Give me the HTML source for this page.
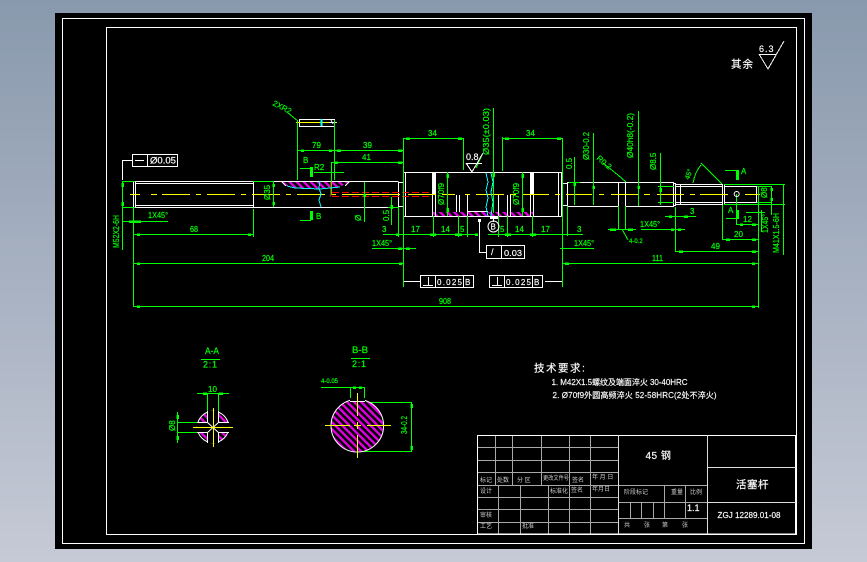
<!DOCTYPE html>
<html><head><meta charset="utf-8"><style>
html,body{margin:0;padding:0;width:867px;height:562px;overflow:hidden;background:linear-gradient(180deg,#8999ad 0%,#c6cad6 100%)}
svg{position:absolute;left:0;top:0}
text{font-family:"Liberation Sans","WenQuanYi Zen Hei","Noto Sans CJK SC",sans-serif}
.g{fill:#0f0;font-size:8px}.g text{stroke:#0f0;stroke-width:.2}.w{fill:#fff;font-size:8px}.w text{stroke:#fff;stroke-width:.15}.a{fill:#ccc;font-size:6px;font-family:"Noto Sans CJK SC",sans-serif}
</style></head><body>
<svg width="867" height="562" viewBox="0 0 867 562" fill="none">
<defs>
<pattern id="h" width="5" height="5" patternUnits="userSpaceOnUse" patternTransform="rotate(-45)"><rect width="5" height="5" fill="#000"/><rect width="2.4" height="5" fill="#e000e0"/></pattern>
</defs>
<rect x="55" y="13" width="757" height="536" fill="#000"/>
<g shape-rendering="crispEdges">
<rect x="62.5" y="18.5" width="742" height="525" stroke="#fff"/>
<rect x="106.5" y="27.5" width="690" height="507" stroke="#fff"/>

<!-- hatched -->
<path d="M282 182L286 186L296 188L320 189L340 187L349 182Z" fill="url(#h)"/>
<rect x="433" y="212" width="100" height="4" fill="url(#h)"/>

<!-- shaft white -->
<path stroke="#fff" d="M133.5 181.5H398.5M133.5 207.5H398.5M133.5 181.5V207.5M135.5 181.5V207.5M135 183.5H253M135 205.5H253M253.5 181.5V207.5
M398.5 182V207M398 182.5H403M398 206.5H403M403.5 172V216.5M405.5 172V216.5M403.5 172.5H561.5M403.5 216.5H561.5M561.5 172V216.5M558.5 172V216.5
M562 183.5H567M562 205.5H567M567.5 182V206.5M567 182.5H618M567 206.5H618M618.5 182V206.5M625.5 182V207M618 182.5H673M625 206.5H673M673.5 182V207M673 183.5H676M673 205.5H676M675.5 183V206M680.5 184V205M676 184.5H722M676 186.5H722M676 202.5H722M676 204.5H722M722.5 184V205M724.5 184V205M724 186.5H757M724 202.5H757M756.5 186V203M758.5 187V203
M456.5 195V212M459.5 195V212M467.5 195V216M467 211.5H488M498.5 195V216M507.5 195V216M510.5 195V216"/>
<rect x="432" y="172" width="4" height="23" fill="#fff"/><rect x="530" y="172" width="4" height="23" fill="#fff"/>
<path stroke="#fff" d="M432.5 195V216M435.5 195V216M530.5 195V216M533.5 195V216"/>

<!-- keyway -->
<rect x="299.5" y="119.5" width="35" height="7" stroke="#fff"/>
<path stroke="#ff0" d="M296 122.5H337"/>
<path stroke="#0ff" stroke-width="2" d="M321.5 119V126"/>
<path stroke="#fff" d="M331 120L333 124M329 122.5H336"/>

<!-- centre line -->
<path stroke="#ff0" d="M130 194.5H140M151 194.5H157M162 194.5H190M196 194.5H201M207 194.5H235M241 194.5H246M252 194.5H280M286 194.5H291M297 194.5H325M331 194.5H336M342 194.5H400M408 194.5H436M442 194.5H455M465 194.5H470M476 194.5H504M510 194.5H516M522 194.5H549M555 194.5H560M566 194.5H592M599 194.5H604M611 194.5H639M644 194.5H650M657 194.5H684M690 194.5H695M700 194.5H728M745 194.5H760"/>
<!-- red -->
<path stroke="#f00" stroke-dasharray="7 3" d="M332 192.5H432M332 196.5H432"/>
<path stroke="#f00" d="M330.5 182V196.5"/>

<!-- green dims -->
<path stroke="#0f0" d="M122.5 181V250M122 181.5H135M122 207.5H135M123 221.5H168M133.5 208V307M133 234.5H253M253.5 209V237M133 263.5H403M133 306.5H758M253 181.5H273M273.5 181V207M297.5 120V180M334.5 120V180M297 150.5H403M331.5 162V195M331 162.5H403M300 168.5H311M314 172.5H344M300 220.5H311
M403.5 138V287M403 138.5H463M463.5 138V170M502.5 137V171M502 138.5H562M562.5 138V287M493.5 108V213M447.5 172V216M522.5 172V216M383 234.5H478M488 234.5H583M433.5 216V237M458.5 216V237M507.5 216V237M532.5 216V237M467.5 216V237M498.5 216V237M398.5 207V237M372 248.5H416M391.5 197V225M388 207.5H398M364.5 182V222M574.5 157V205M569 182.5H580M560 248.5H594
M758.5 186V308M562 263.5H758M593.5 133V205M638.5 111V206M660.5 153V205M658 186.5H674M658 202.5H674M665 216.5H696M641 229.5H685M675.5 207V252M608 229.5H636M618.5 206V229M625.5 206V229M771.5 186V215M757 186.5H772M757 202.5H772M783.5 184V255M724 184.5H785M724 204.5H785M761.5 210V232M746 212.5H765M736.5 194V225M736 224.5H758M722.5 205V240M722 239.5H758M675 251.5H758M725 170.5H737M726 218.5H737M567.5 206V236"/>
<path stroke="#0f0" stroke-width="3" d="M311.5 167V177M311.5 211V220M737.5 170V180M737.5 210V219"/>
<path stroke="#0f0" d="M288 113L298 121M482 155L476 168M603 163L618 175L626 182M622 229L628 240M701 163L722 184M693 183Q695 172 701 165"/>
<!-- arrow blobs -->
<path stroke="#0f0" stroke-width="2.5" d="M122.5 183V187M122.5 202V206M129 221.5H141M137 234.5H140M248 234.5H251M137 263.5H140M399 263.5H402M137 306.5H140M273.5 184V187M273.5 202V205M301 150.5H304M329 150.5H332M337 150.5H341M398 150.5H402M334 162.5H338M398 162.5H402M406 138.5H410M458 138.5H462M505 138.5H509M557 138.5H561M447.5 174V178M447.5 208V212M522.5 174V178M522.5 208V212M493.5 173V177M396 234.5H399M430 234.5H436M455 234.5H462M475 234.5H478M505 234.5H511M530 234.5H536M398 248.5H402M406 248.5H410M565 263.5H569M752 263.5H755M752 306.5H755M752 224.5H756M740 224.5H743M726 239.5H730M752 239.5H756M679 251.5H683M752 251.5H756M593.5 186V189M638.5 186V189M660.5 188V192M771.5 188V191M771.5 198V201M574.5 182V186M391.5 205V209M364.5 194V197M610 229.5H616M628 229.5H633M669 216.5H672M684 216.5H688M671 229.5H674M678 229.5H681"/>

<!-- cyan -->
<path stroke="#0ff" d="M287 186L295 188L320 189L340 187M320 181L319 188L321 194L319 200L321 207M486 173L488 182L486 190L488 198L486 207L488 216M491 173L493 182L491 192L493 202L491 216"/>
<path stroke="#fff" d="M282 182L286 186M349 182L345 186"/>

<!-- boxes -->
<rect x="132.5" y="154.5" width="45" height="12" stroke="#fff"/>
<path stroke="#fff" d="M147.5 155V166M122.5 160.5H132M122.5 160V180M135 160.5H144"/>
<rect x="486.5" y="245.5" width="38" height="13" stroke="#fff"/>
<path stroke="#fff" d="M501.5 246V258M486 252.5H479.5V220"/>
<rect x="478" y="219" width="3" height="3" fill="#fff"/>
<rect x="420.5" y="275.5" width="53" height="12" stroke="#fff"/>
<path stroke="#fff" d="M435.5 276V287M463.5 276V287M404 281.5H420M423 285.5H433M428.5 277V285"/>
<rect x="489.5" y="275.5" width="53" height="12" stroke="#fff"/>
<path stroke="#fff" d="M504.5 276V287M532.5 276V287M545 281.5H562M492 285.5H502M497.5 277V285"/>
<rect x="490" y="216" width="8" height="3" fill="#fff"/>
<path stroke="#fff" d="M493.5 219V222"/>

<!-- roughness -->
<path stroke="#fff" d="M466 163.5H482M466 163L472 172L483 153M759 54.5H776M759 54L768 69L784 41"/>

<!-- title table grey -->
<path stroke="#a8a8a8" d="M478 447.5H618M478 460.5H618M478 472.5H618M478 485.5H618M478 497.5H618M478 509.5H618M478 522.5H618
M495.5 435V485M512.5 435V485M541.5 435V485M569.5 435V485M590.5 435V485
M498.5 485V534M520.5 485V534M548.5 485V534M569.5 485V534M590.5 485V534
M618 485.5H708M618 502.5H708M618 518.5H708M664.5 485V518M685.5 485V518M630.5 502V518M641.5 502V518M653.5 502V518"/>
<rect x="477.5" y="435.5" width="318" height="98.5" stroke="#fff"/>
<path stroke="#ddd" d="M618.5 435V534M707.5 435V534M708 467.5H796M708 502.5H796"/>

<!-- sections -->
<path stroke="#0f0" d="M201 359.5H220M351 358.5H370M197 393.5H229M207.5 393V411M218.5 393V411M177.5 412V443M177 422.5H197M177 432.5H197M321 387.5H365M350.5 387V400M364.5 387V400M411.5 402V451M364 402.5H412M357 451.5H412"/>
<path stroke="#0f0" stroke-width="2.5" d="M177.5 415V419M177.5 436V440M203 393.5H207M219 393.5H223M411.5 404V408M411.5 446V450M353 387.5H356M359 387.5H362"/>
</g>

<!-- circle A -->
<circle cx="213" cy="427" r="15.7" fill="url(#h)" stroke="#fff"/>
<g shape-rendering="crispEdges">
<rect x="207" y="411" width="12" height="32" fill="#000"/><rect x="197" y="422" width="32" height="11" fill="#000"/>
<path stroke="#fff" d="M207.5 411V422M218.5 411V422M207.5 432V443M218.5 432V443M197 422.5H207M219 422.5H229M197 432.5H207M219 432.5H229"/>
</g>
<path stroke="#fff" d="M207 422L219 433M219 422L207 433"/>
<!-- circle B -->
<circle cx="357.3" cy="425.7" r="26.3" fill="url(#h)" stroke="#fff"/>
<g shape-rendering="crispEdges">
<rect x="350" y="398" width="15" height="4" fill="#000"/>
<path stroke="#fff" d="M350 401.5H365"/>
<path stroke="#ff0" d="M193 427.5H233M213.5 408V447M325 425.5H350M354 425.5H361M367 425.5H391M357.5 393V416M357.5 422V429M357.5 435V458"/>
</g>

<!-- green text -->
<g class="g">
<text x="148" y="218" font-size="8" textLength="20" lengthAdjust="spacingAndGlyphs">1X45°</text>
<text x="190" y="232" textLength="8" lengthAdjust="spacingAndGlyphs">68</text>
<text x="262" y="261" textLength="12" lengthAdjust="spacingAndGlyphs">204</text>
<text x="439" y="304" textLength="12" lengthAdjust="spacingAndGlyphs">908</text>
<text x="312" y="148">79</text><text x="363" y="148">39</text><text x="362" y="160">41</text>
<text x="303" y="163">B</text><text x="316" y="219">B</text><text x="314" y="170">R2</text>
<text x="428" y="136">34</text><text x="526" y="136">34</text>
<text x="382" y="232">3</text><text x="411" y="232">17</text><text x="441" y="232">14</text><text x="460" y="232">5</text>
<text x="500" y="232">5</text><text x="515" y="232">14</text><text x="541" y="232">17</text><text x="577" y="232">3</text>
<text x="372" y="246" textLength="20" lengthAdjust="spacingAndGlyphs">1X45°</text><text x="574" y="246" textLength="20" lengthAdjust="spacingAndGlyphs">1X45°</text><text x="640" y="227" textLength="20" lengthAdjust="spacingAndGlyphs">1X45°</text>
<text x="652" y="261" textLength="11" lengthAdjust="spacingAndGlyphs">111</text>
<text x="690" y="214">3</text>
<text x="743" y="222">12</text><text x="734" y="237">20</text><text x="711" y="249">49</text>
<text x="741" y="174">A</text><text x="728" y="213">A</text>
<text x="629" y="243" font-size="6">4-0.2</text>
<text x="321" y="383" font-size="6">4-0.05</text>
<text x="205" y="354" font-size="9" textLength="14" lengthAdjust="spacingAndGlyphs">A-A</text><text x="203" y="367.5" font-size="9" textLength="14">2:1</text>
<text x="352" y="353" font-size="9" textLength="16" lengthAdjust="spacingAndGlyphs">B-B</text><text x="352" y="367" font-size="9" textLength="14">2:1</text>
<text x="208" y="392">10</text>
<text transform="translate(119,248) rotate(-90)" textLength="33" lengthAdjust="spacingAndGlyphs">M52X2-6H</text>
<text transform="translate(270,200) rotate(-90)" font-size="8">Ø35</text>
<text transform="translate(361,221) rotate(-90)">Ø</text>
<text transform="translate(389,221) rotate(-90)">0.5</text>
<text transform="translate(572,169) rotate(-90)">0.5</text>
<text transform="translate(489,155) rotate(-90)" textLength="47" lengthAdjust="spacingAndGlyphs">Ø35(±0.03)</text>
<text transform="translate(444,205) rotate(-90)" textLength="22" lengthAdjust="spacingAndGlyphs">Ø70f9</text>
<text transform="translate(519,205) rotate(-90)" textLength="22" lengthAdjust="spacingAndGlyphs">Ø70f9</text>
<text transform="translate(589,160) rotate(-90)" textLength="28" lengthAdjust="spacingAndGlyphs">Ø30-0.2</text>
<text transform="translate(633,158) rotate(-90)" textLength="45" lengthAdjust="spacingAndGlyphs">Ø40h8(-0.2)</text>
<text transform="translate(656,170) rotate(-90)">Ø8.5</text>
<text transform="translate(767,198) rotate(-90)">Ø8</text>
<text transform="translate(768,233) rotate(-90)" textLength="19" lengthAdjust="spacingAndGlyphs">1X45°</text>
<text transform="translate(779,253) rotate(-90)" textLength="40" lengthAdjust="spacingAndGlyphs">M41X1.5-6H</text>
<text transform="translate(175,431) rotate(-90)">Ø8</text>
<text transform="translate(407,434) rotate(-90)" textLength="18" lengthAdjust="spacingAndGlyphs">34-0.2</text>
<text transform="translate(272,105) rotate(27)">2XR2</text>
<text transform="translate(596,159) rotate(40)">R0.2</text>
<text transform="translate(689,180) rotate(-70)" font-size="7">45°</text>
</g>

<!-- white text -->
<g class="w">
<text x="150" y="163.5" font-size="9" textLength="26" lengthAdjust="spacingAndGlyphs">Ø0.05</text>
<text x="466" y="160" font-size="9">0.8</text>
<text x="504" y="256" textLength="18" font-size="8" lengthAdjust="spacingAndGlyphs">0.03</text>
<text x="437" y="285" textLength="25">0.025</text><text x="465" y="285">B</text>
<text x="506" y="285" textLength="25">0.025</text><text x="534" y="285">B</text>
<text x="491" y="255" font-size="9">/</text>
<text x="759" y="52" font-size="9" letter-spacing="1">6.3</text>
<text x="731" y="67.5" font-size="10.5" font-family="WenQuanYi Zen Hei" letter-spacing="1">其余</text>
<text x="534" y="371.5" font-size="10.5" letter-spacing="1.5" style="font-family:'WenQuanYi Zen Hei',sans-serif">技术要求:</text>
<text x="551.5" y="385" font-size="8" textLength="136" style="font-family:'Liberation Sans','WenQuanYi Zen Hei',sans-serif">1. M42X1.5螺纹及端面淬火 30-40HRC</text>
<text x="552.5" y="398" font-size="8" textLength="164" style="font-family:'Liberation Sans','WenQuanYi Zen Hei',sans-serif">2. Ø70f9外圆高频淬火 52-58HRC(2处不淬火)</text>
<text x="645.5" y="459" font-size="10" letter-spacing=".5">45 钢</text>
<text x="736" y="488" font-size="10.5" letter-spacing=".5">活塞杆</text>
<text x="717.5" y="518" font-size="8" textLength="63" lengthAdjust="spacingAndGlyphs">ZGJ 12289.01-08</text>
<text x="687" y="511" font-size="9">1.1</text>
<text x="490.5" y="229.5" font-size="8">B</text>
</g>
<circle cx="493.5" cy="226.5" r="5.5" stroke="#fff"/>
<circle cx="736.7" cy="194" r="2.5" stroke="#fff"/>

<!-- small table labels -->
<g class="a">
<text x="480" y="482">标记</text><text x="497" y="482">处数</text><text x="517" y="482">分 区</text><text x="543" y="480" textLength="26" lengthAdjust="spacingAndGlyphs">更改文件号</text><text x="572" y="482">签名</text><text x="592" y="479">年 月 日</text>
<text x="480" y="493">设计</text><text x="550" y="493">标准化</text><text x="571" y="492">签名</text><text x="592" y="491">年月日</text>
<text x="480" y="517">审核</text><text x="480" y="528">工艺</text><text x="522" y="528">批准</text>
<text x="624" y="494">阶段标记</text><text x="671" y="494">重量</text><text x="690" y="494">比例</text>
<text x="624" y="527">共</text><text x="644" y="527">张</text><text x="662" y="527">第</text><text x="682" y="527">张</text>
</g>
</svg>
</body></html>
